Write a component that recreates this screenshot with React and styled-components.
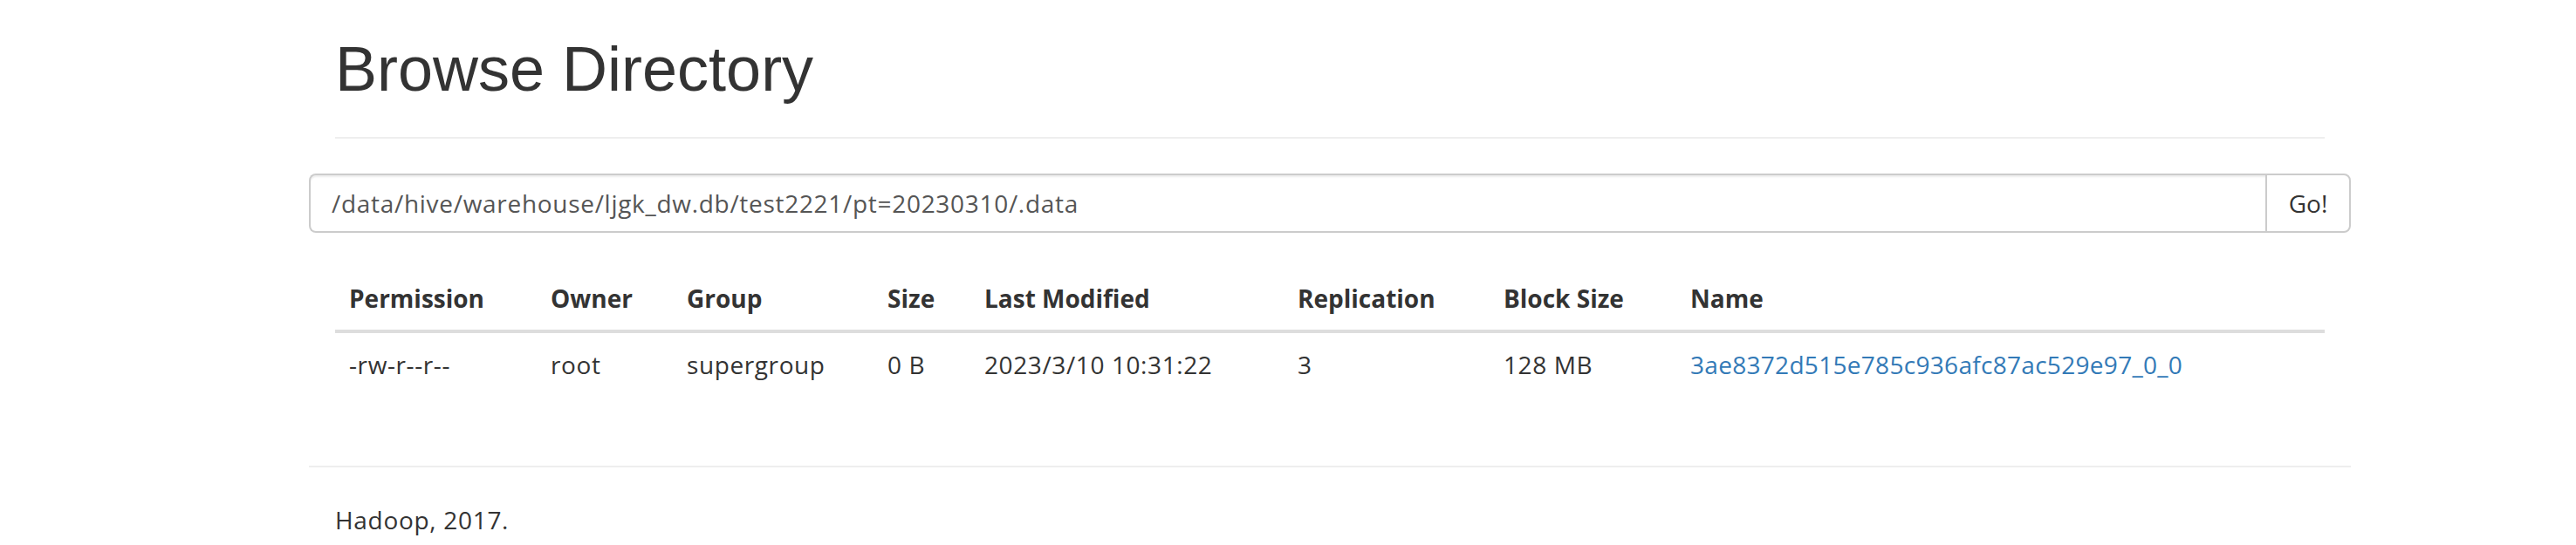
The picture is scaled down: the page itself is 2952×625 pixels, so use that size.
import React from 'react';
import styled, { createGlobalStyle } from 'styled-components';

const GlobalStyle = createGlobalStyle`
  html, body {
    margin: 0;
    padding: 0;
    background: #fff;
  }
  body {
    font-family: 'Open Sans', 'Noto Sans', sans-serif;
    font-size: 28px;
    line-height: 40px;
    color: #333;
  }
`;

const Page = styled.div`
  padding-left: 354px;
`;

const Container = styled.div`
  width: 2340px;
`;

const PageHeader = styled.div`
  margin: 0 30px 40px;
  padding: 40px 0 18px;
  border-bottom: 2px solid #eee;
`;

const Title = styled.h1`
  margin: 0 0 20px;
  font-family: 'Liberation Sans', Arial, sans-serif;
  font-size: 72px;
  font-weight: 400;
  line-height: 1.1;
  color: #333;
`;

const InputGroup = styled.form`
  display: flex;
  height: 68px;
  margin: 0;
`;

const PathInput = styled.input`
  flex: 1;
  min-width: 0;
  box-sizing: border-box;
  height: 68px;
  padding: 0 24px;
  border: 2px solid #ccc;
  border-right: 0;
  border-radius: 8px 0 0 8px;
  box-shadow: inset 0 2px 2px rgba(0, 0, 0, 0.075);
  font-family: inherit;
  font-size: 28px;
  letter-spacing: 0.7px;
  color: #555;
  outline: none;
`;

const GoButton = styled.button`
  box-sizing: border-box;
  width: 98px;
  height: 68px;
  padding: 0;
  border: 2px solid #ccc;
  border-radius: 0 8px 8px 0;
  background: #fff;
  font-family: inherit;
  font-size: 28px;
  color: #333;
  cursor: pointer;
`;

const TableWrap = styled.div`
  margin: 39px 30px 0;
`;

const Table = styled.table`
  width: 100%;
  table-layout: fixed;
  border-collapse: collapse;
  border-spacing: 0;
`;

const Th = styled.th`
  box-sizing: border-box;
  width: ${({ $w }) => ($w ? `${$w}px` : 'auto')};
  padding: 16px;
  text-align: left;
  font-weight: 700;
  line-height: 40px;
  border-bottom: 4px solid #ddd;
  white-space: nowrap;
`;

const Td = styled.td`
  padding: 16px;
  line-height: 40px;
  letter-spacing: 0.6px;
  white-space: nowrap;
`;

const FileLink = styled.a`
  color: #337ab7;
  text-decoration: none;
  letter-spacing: 0.3px;
`;

const Footer = styled.footer`
  margin-top: 80px;
  border-top: 2px solid #eee;
  padding: 40px 30px 0;
`;

const FooterText = styled.p`
  margin: 0 0 20px;
  letter-spacing: 0.7px;
`;

const columns = [
  { label: 'Permission', width: 231 },
  { label: 'Owner', width: 156 },
  { label: 'Group', width: 230 },
  { label: 'Size', width: 111 },
  { label: 'Last Modified', width: 359 },
  { label: 'Replication', width: 236 },
  { label: 'Block Size', width: 214 },
  { label: 'Name' },
];

const rows = [
  {
    permission: '-rw-r--r--',
    owner: 'root',
    group: 'supergroup',
    size: '0 B',
    modified: '2023/3/10 10:31:22',
    replication: '3',
    blockSize: '128 MB',
    name: '3ae8372d515e785c936afc87ac529e97_0_0',
  },
];

const App = () => {
  return (
    <>
      <GlobalStyle />
      <Page>
        <Container>
          <PageHeader>
            <Title>Browse Directory</Title>
          </PageHeader>
          <InputGroup onSubmit={(e) => e.preventDefault()}>
            <PathInput
              type="text"
              readOnly
              defaultValue="/data/hive/warehouse/ljgk_dw.db/test2221/pt=20230310/.data"
            />
            <GoButton type="submit">Go!</GoButton>
          </InputGroup>
          <TableWrap>
            <Table>
              <thead>
                <tr>
                  {columns.map((c) => (
                    <Th key={c.label} $w={c.width}>
                      {c.label}
                    </Th>
                  ))}
                </tr>
              </thead>
              <tbody>
                {rows.map((r) => (
                  <tr key={r.name}>
                    <Td>{r.permission}</Td>
                    <Td>{r.owner}</Td>
                    <Td>{r.group}</Td>
                    <Td>{r.size}</Td>
                    <Td>{r.modified}</Td>
                    <Td>{r.replication}</Td>
                    <Td>{r.blockSize}</Td>
                    <Td>
                      <FileLink href="#">{r.name}</FileLink>
                    </Td>
                  </tr>
                ))}
              </tbody>
            </Table>
          </TableWrap>
          <Footer>
            <FooterText>Hadoop, 2017.</FooterText>
          </Footer>
        </Container>
      </Page>
    </>
  );
};

export default App;
